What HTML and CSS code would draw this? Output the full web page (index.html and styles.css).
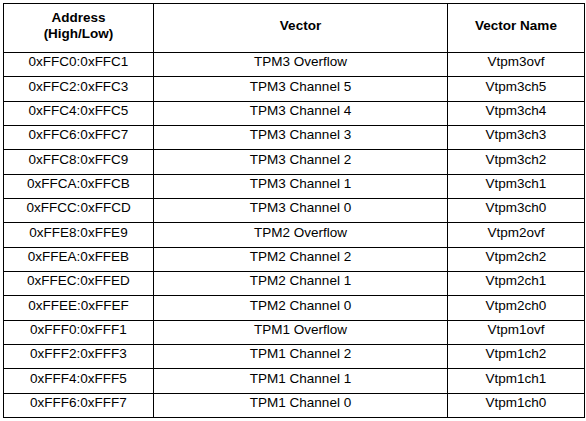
FILE: index.html
```html
<!DOCTYPE html>
<html>
<head>
<meta charset="utf-8">
<link rel="stylesheet" href="styles.css">
</head>
<body>
<table class="vec-table">
  <colgroup>
    <col class="c-addr">
    <col class="c-vec">
    <col class="c-name">
  </colgroup>
  <thead>
    <tr class="head-row">
      <th>Address<br>(High/Low)</th>
      <th>Vector</th>
      <th>Vector Name</th>
    </tr>
  </thead>
  <tbody>
    <tr><td>0xFFC0:0xFFC1</td><td>TPM3 Overflow</td><td>Vtpm3ovf</td></tr>
    <tr><td>0xFFC2:0xFFC3</td><td>TPM3 Channel 5</td><td>Vtpm3ch5</td></tr>
    <tr><td>0xFFC4:0xFFC5</td><td>TPM3 Channel 4</td><td>Vtpm3ch4</td></tr>
    <tr><td>0xFFC6:0xFFC7</td><td>TPM3 Channel 3</td><td>Vtpm3ch3</td></tr>
    <tr><td>0xFFC8:0xFFC9</td><td>TPM3 Channel 2</td><td>Vtpm3ch2</td></tr>
    <tr><td>0xFFCA:0xFFCB</td><td>TPM3 Channel 1</td><td>Vtpm3ch1</td></tr>
    <tr><td>0xFFCC:0xFFCD</td><td>TPM3 Channel 0</td><td>Vtpm3ch0</td></tr>
    <tr><td>0xFFE8:0xFFE9</td><td>TPM2 Overflow</td><td>Vtpm2ovf</td></tr>
    <tr><td>0xFFEA:0xFFEB</td><td>TPM2 Channel 2</td><td>Vtpm2ch2</td></tr>
    <tr><td>0xFFEC:0xFFED</td><td>TPM2 Channel 1</td><td>Vtpm2ch1</td></tr>
    <tr><td>0xFFEE:0xFFEF</td><td>TPM2 Channel 0</td><td>Vtpm2ch0</td></tr>
    <tr><td>0xFFF0:0xFFF1</td><td>TPM1 Overflow</td><td>Vtpm1ovf</td></tr>
    <tr><td>0xFFF2:0xFFF3</td><td>TPM1 Channel 2</td><td>Vtpm1ch2</td></tr>
    <tr><td>0xFFF4:0xFFF5</td><td>TPM1 Channel 1</td><td>Vtpm1ch1</td></tr>
    <tr><td>0xFFF6:0xFFF7</td><td>TPM1 Channel 0</td><td>Vtpm1ch0</td></tr>
  </tbody>
</table>
</body>
</html>
```

FILE: styles.css
```css
html, body {
  margin: 0;
  padding: 0;
  background: #ffffff;
}

body {
  padding: 3px;
  font-family: "Liberation Sans", Arial, sans-serif;
  font-size: 13.5px;
  color: #000000;
}

.vec-table {
  border-collapse: collapse;
  table-layout: fixed;
  width: 581px;
}

.c-addr { width: 150px; }
.c-vec { width: 294px; }
.c-name { width: 137px; }

.vec-table th,
.vec-table td {
  border: 1px solid #000000;
  text-align: center;
  vertical-align: middle;
  padding: 0 2px 5px;
  line-height: 15.5px;
}

.vec-table th {
  font-weight: bold;
}

.head-row {
  height: 49px;
}

.vec-table tbody tr {
  height: 24.33px;
}
```
